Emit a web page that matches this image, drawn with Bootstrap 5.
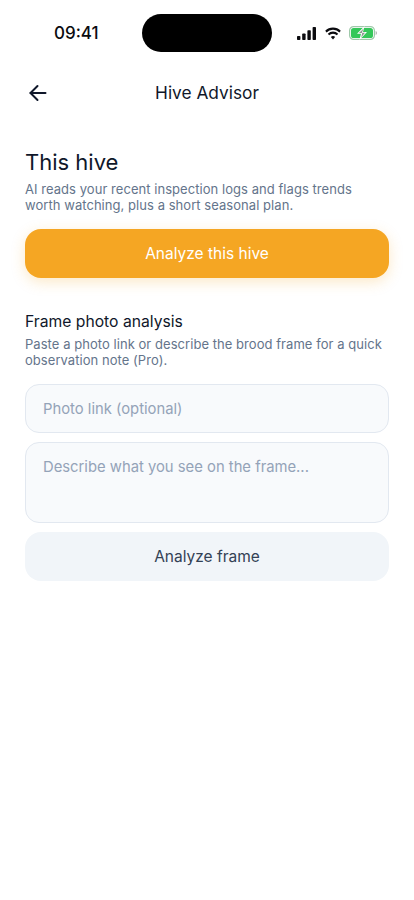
<!doctype html>
<html lang="en">
<head>
<meta charset="utf-8">
<meta name="viewport" content="width=device-width, initial-scale=1">
<title>Hive Advisor</title>
<link href="https://cdn.jsdelivr.net/npm/bootstrap@5.3.0/dist/css/bootstrap.min.css" rel="stylesheet">
<style>
html,body{background:#fff;}
body{font-family:Inter,"Liberation Sans",sans-serif;color:#0f172a;width:414px;min-height:900px;overflow:hidden;}
.status-strip{height:66px;padding:14px 37px 0 54px;}
.clock{font-size:17px;font-weight:500;color:#0b0b0f;line-height:38px;width:46px;}
.island{width:130px;height:38px;background:#000;border-radius:19px;margin-left:42px;}
.status-icons{height:38px;}
.topbar{height:54px;padding:0 25px;position:relative;}
.back-btn{background:none;border:0;padding:0;width:24px;height:24px;line-height:0;}
.topbar-title{font-size:17.3px;font-weight:400;color:#0f172a;margin:0;line-height:24px;}
.body-wrap{padding:0 25px;}
.section-one{padding-top:28px;}
.hive-heading{font-size:22px;font-weight:400;line-height:29px;margin:0 0 4px;color:#0f172a;}
.helper{font-size:13px;line-height:16px;color:#64748b;margin:0;letter-spacing:.05px;}
.btn-hive{height:49px;border-radius:16px;background:#f5a623;border:0;color:#fff;font-size:15.5px;font-weight:400;box-shadow:0 4px 14px rgba(245,166,35,.25);margin-top:16px;}
.btn-hive:hover{background:#f5a623;color:#fff;}
.frame-heading{font-size:15.7px;font-weight:400;line-height:20px;color:#0f172a;margin:0 0 4px;}
.section-two{padding-top:34px;}
.field-input{background:#f8fafc;border:1px solid #e2e8f0;border-radius:14px;font-size:14.8px;color:#0f172a;padding:0 17px;box-shadow:none;}
.field-input::placeholder{color:#94a3b8;opacity:1;}
.one-line{height:49px;margin-top:16px;}
.multi-line{height:81px;min-height:81px;margin-top:9px;padding-top:14px;padding-bottom:14px;line-height:20px;resize:none;}
.btn-frame{height:49px;border-radius:16px;background:#f1f5f9;border:0;color:#334155;font-size:15.5px;font-weight:400;margin-top:9px;}
.btn-frame:hover{background:#f1f5f9;color:#334155;}
</style>
</head>
<body>
<div class="status-strip d-flex align-items-start">
  <span class="clock">09:41</span>
  <div class="island"></div>
  <div class="status-icons d-flex align-items-center gap-2 ms-auto">
    <svg width="20" height="13" viewBox="0 0 20 13" aria-hidden="true"><g fill="#0b0b0f"><rect x="0" y="9" width="3.4" height="4" rx=".8"/><rect x="5.2" y="6.5" width="3.4" height="6.5" rx=".8"/><rect x="10.4" y="3.3" width="3.4" height="9.7" rx=".8"/><rect x="15.6" y="0" width="3.4" height="13" rx=".8"/></g></svg>
    <svg width="16" height="13" viewBox="0 0 18 13" preserveAspectRatio="none" aria-hidden="true"><g fill="none" stroke="#0b0b0f" stroke-width="2.2"><path d="M1 4.6C5.4.6 12.6.6 17 4.6"/><path d="M3.9 7.5c2.8-2.5 7.4-2.5 10.2 0"/></g><path d="M6.6 9.9c1.4-1.1 3.4-1.1 4.8 0L9 12.6z" fill="#0b0b0f"/></svg>
    <svg width="28" height="14" viewBox="0 0 28 14" aria-hidden="true"><rect x=".6" y=".6" width="24.8" height="12.8" rx="4" fill="#fff" stroke="#9fc9aa" stroke-width="1.2"/><rect x="2" y="2" width="22" height="10" rx="2.6" fill="#34c759"/><path d="M26.6 5c.8.3 1.3 1.1 1.3 2s-.5 1.7-1.3 2z" fill="#a9b3ab"/><path d="M15.6 0 8 7.8h4L10.4 14l7.6-8h-4z" fill="#fff"/><path d="M14.6 2.4 10 7h3.2l-1 4.6L16 6.8h-3.2z" fill="#8a968e"/></svg>
  </div>
</div>

<header class="topbar d-flex align-items-center justify-content-center">
  <button class="back-btn position-absolute start-0 ms-4" type="button" aria-label="Back">
    <svg width="24" height="24" viewBox="0 0 24 24" fill="none" stroke="#0f172a" stroke-width="2" stroke-linecap="round" stroke-linejoin="round" aria-hidden="true"><path d="M21.5 12H6.5"/><path d="M13.5 5l-7 7 7 7"/></svg>
  </button>
  <h1 class="topbar-title">Hive Advisor</h1>
</header>

<main class="body-wrap d-flex flex-column">
  <section class="section-one d-flex flex-column">
    <h2 class="hive-heading">This hive</h2>
    <p class="helper">AI reads your recent inspection logs and flags trends worth watching, plus a short seasonal plan.</p>
    <button class="btn btn-hive w-100" type="button">Analyze this hive</button>
  </section>
  <section class="section-two d-flex flex-column">
    <h3 class="frame-heading">Frame photo analysis</h3>
    <p class="helper">Paste a photo link or describe the brood frame for a quick observation note (Pro).</p>
    <input class="form-control field-input one-line" type="text" placeholder="Photo link (optional)">
    <textarea class="form-control field-input multi-line" placeholder="Describe what you see on the frame..."></textarea>
    <button class="btn btn-frame w-100" type="button">Analyze frame</button>
  </section>
</main>
<script src="https://cdn.jsdelivr.net/npm/bootstrap@5.3.0/dist/js/bootstrap.bundle.min.js"></script>
</body>
</html>
